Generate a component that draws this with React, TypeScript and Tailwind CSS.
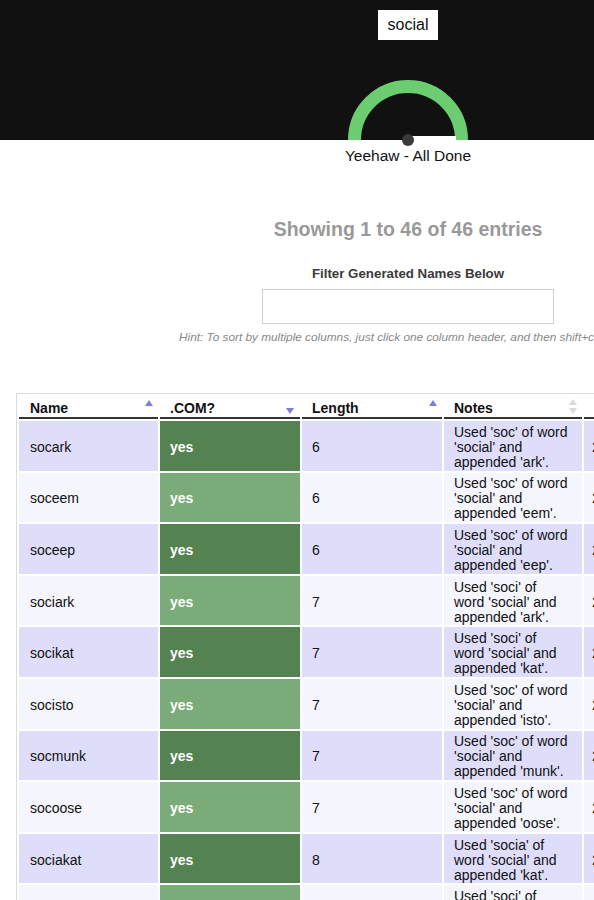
import React from "react";

type Row = { name: string; len: string; notes: string[] };

const rows: Row[] = [
  { name: "socark", len: "6", notes: ["Used 'soc' of word", "'social' and", "appended 'ark'."] },
  { name: "soceem", len: "6", notes: ["Used 'soc' of word", "'social' and", "appended 'eem'."] },
  { name: "soceep", len: "6", notes: ["Used 'soc' of word", "'social' and", "appended 'eep'."] },
  { name: "sociark", len: "7", notes: ["Used 'soci' of", "word 'social' and", "appended 'ark'."] },
  { name: "socikat", len: "7", notes: ["Used 'soci' of", "word 'social' and", "appended 'kat'."] },
  { name: "socisto", len: "7", notes: ["Used 'soc' of word", "'social' and", "appended 'isto'."] },
  { name: "socmunk", len: "7", notes: ["Used 'soc' of word", "'social' and", "appended 'munk'."] },
  { name: "socoose", len: "7", notes: ["Used 'soc' of word", "'social' and", "appended 'oose'."] },
  { name: "sociakat", len: "8", notes: ["Used 'socia' of", "word 'social' and", "appended 'kat'."] },
  { name: "socieem", len: "7", notes: ["Used 'soci' of", "word 'social' and", "appended 'eem'."] },
  { name: "socmunk", len: "7", notes: ["Used 'soc' of word", "'social' and", "appended 'unk'."] },
];

const Up = ({ color = "#7c7cde" }: { color?: string }) => (
  <svg width="8" height="6" viewBox="0 0 8 6">
    <path d="M4 0 L8 6 L0 6 Z" fill={color} />
  </svg>
);

const Down = ({ color = "#7c7cde" }: { color?: string }) => (
  <svg width="8" height="6" viewBox="0 0 8 6">
    <path d="M0 0 L8 0 L4 6 Z" fill={color} />
  </svg>
);

const Gauge = () => (
  <svg width="130" height="61" viewBox="0 0 130 61" className="mt-auto overflow-visible">
    <path d="M 11.5 61 A 53.5 53.5 0 0 1 118.5 61" stroke="#6bcd70" strokeWidth="13" fill="none" />
    <rect x="65" y="57" width="48" height="4" fill="#ffffff" />
    <circle cx="65" cy="61" r="6" fill="#3a3a3a" />
  </svg>
);

export default function App() {
  return (
    <div className="w-full overflow-hidden bg-white font-['Liberation_Sans',Arial,sans-serif] text-[#111]">
      <div className="w-[816px]">
        <div className="h-[140px] bg-[#111] flex flex-col items-center">
          <div className="mt-[10px] w-[60px] h-[30px] bg-white flex items-center justify-center text-[16px]">
            social
          </div>
          <Gauge />
        </div>

        <div className="flex flex-col items-center">
          <div className="mt-[7px] text-[15.5px] leading-[18px]">Yeehaw - All Done</div>
          <div className="mt-[52px] text-[19.5px] leading-[24px] font-bold text-[#999]">
            Showing 1 to 46 of 46 entries
          </div>
          <div className="mt-[25px] text-[13.3px] leading-[16px] font-bold text-[#3a3a3a]">
            Filter Generated Names Below
          </div>
          <input
            type="text"
            className="mt-[7px] w-[292px] h-[35px] border border-[#cfcfcf] bg-white outline-none"
          />
        </div>
        <div className="mt-[6px] pl-[179px] text-[11.8px] leading-[14px] italic text-[#888] whitespace-nowrap">
          Hint: To sort by multiple columns, just click one column header, and then shift+click another.
        </div>

        <div className="mt-[49px] ml-[16px] w-[790px] border-l border-t border-[#dcdcdc]">
          <table className="table-fixed border-separate border-spacing-[2px] w-[769px] text-[14px] leading-[15px]">
            <colgroup>
              <col className="w-[139px]" />
              <col className="w-[140px]" />
              <col className="w-[140px]" />
              <col className="w-[138px]" />
              <col className="w-[200px]" />
            </colgroup>
            <thead>
              <tr className="h-[23px]">
                <th className="border-b-2 border-[#333] bg-white pl-[11px] pr-[5px] text-left font-bold">
                  <div className="flex justify-between items-start h-[20px]">
                    <span className="mt-[4px]">Name</span>
                    <span className="mt-[3px]"><Up /></span>
                  </div>
                </th>
                <th className="border-b-2 border-[#333] bg-white pl-[10px] pr-[6px] text-left font-bold">
                  <div className="flex justify-between items-start h-[20px]">
                    <span className="mt-[4px]">.COM?</span>
                    <span className="mt-[11px]"><Down /></span>
                  </div>
                </th>
                <th className="border-b-2 border-[#333] bg-white pl-[10px] pr-[5px] text-left font-bold">
                  <div className="flex justify-between items-start h-[20px]">
                    <span className="mt-[4px]">Length</span>
                    <span className="mt-[3px]"><Up /></span>
                  </div>
                </th>
                <th className="border-b-2 border-[#333] bg-white pl-[10px] pr-[5px] text-left font-bold">
                  <div className="flex justify-between items-start h-[20px]">
                    <span className="mt-[4px]">Notes</span>
                    <span className="mt-[2px] flex flex-col gap-[3px]">
                      <Up color="#dadada" />
                      <Down color="#dadada" />
                    </span>
                  </div>
                </th>
                <th className="border-b-2 border-[#333] bg-white pl-[10px] text-left font-bold">
                  <div className="h-[20px] pt-[4px]">Syllables</div>
                </th>
              </tr>
            </thead>
            <tbody>
              {rows.map((r, i) => {
                const odd = i % 2 === 0;
                const base = odd ? "bg-[#dedefa]" : "bg-[#f5f5fd]";
                return (
                  <tr key={i} className="h-[49.6px]">
                    <td className={`${base} pl-[11px] pt-[3px] align-middle`}>{r.name}</td>
                    <td
                      className={`${odd ? "bg-[#548250]" : "bg-[#7aab78]"} pl-[10px] pt-[3px] font-bold text-white align-middle`}
                    >
                      yes
                    </td>
                    <td className={`${base} pl-[10px] pt-[3px] align-middle`}>{r.len}</td>
                    <td className={`${base} pl-[10px] pt-[3px] align-middle whitespace-nowrap`}>
                      {r.notes.map((n, j) => (
                        <div key={j}>{n}</div>
                      ))}
                    </td>
                    <td className={`${base} pl-[8px] pt-[3px] align-middle`}>2</td>
                  </tr>
                );
              })}
            </tbody>
          </table>
        </div>
      </div>
    </div>
  );
}
